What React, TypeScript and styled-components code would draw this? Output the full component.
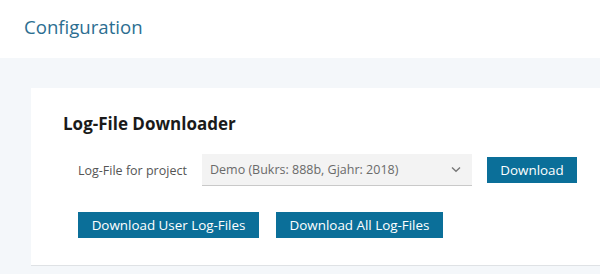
import React from "react";
import styled, { createGlobalStyle } from "styled-components";

const Global = createGlobalStyle`
  html, body { margin: 0; padding: 0; background: #f4f7fa; overflow: hidden; }
  body { font-family: "Open Sans", "Liberation Sans", sans-serif; }
  * { box-sizing: border-box; }
`;

const Header = styled.header`
  height: 58px;
  background: #ffffff;
  display: flex;
  align-items: center;
  padding-left: 24px;
`;

const PageTitle = styled.h1`
  margin: 0;
  font-size: 18.6px;
  font-weight: 400;
  color: #2c6e91;
  line-height: 26px;
  padding-bottom: 4px;
`;

const Main = styled.main`
  padding: 30px 0 10px 31px;
  min-height: 216px;
`;

const Card = styled.section`
  background: #ffffff;
  padding: 24px 32px 27px 32px;
  border-bottom: 1px solid #dfe2e5;
  display: flex;
  flex-direction: column;
`;

const CardTitle = styled.h2`
  margin: 0;
  font-size: 17px;
  font-weight: 700;
  line-height: 24px;
  color: #1a1a1a;
`;

const Body = styled.div`
  padding-left: 15px;
  margin-top: 18px;
  display: flex;
  flex-direction: column;
  gap: 26px;
`;

const Row = styled.div<{ $gap: number }>`
  display: flex;
  align-items: center;
  gap: ${(p) => p.$gap}px;
  & > * { flex-shrink: 0; }
`;

const Label = styled.label`
  font-size: 12.5px;
  color: #555;
  width: 109px;
  white-space: nowrap;
`;

const SelectBox = styled.div`
  width: 270px;
  height: 32px;
  background: #f3f3f3;
  border-bottom: 1px solid #c9c9c9;
  display: flex;
  align-items: center;
  justify-content: space-between;
  padding: 0 11px 0 8px;
  font-size: 12.5px;
  color: #6a6a6a;
`;

const Button = styled.button<{ $w: number }>`
  width: ${(p) => p.$w}px;
  height: 26px;
  background: #0b6f99;
  color: #ffffff;
  border: none;
  border-radius: 0;
  font-family: "Open Sans", "Liberation Sans", sans-serif;
  font-size: 13.4px;
  padding: 0;
  cursor: pointer;
`;

const Chevron = () => (
  <svg width="10" height="7" viewBox="0 0 10 7" fill="none">
    <path d="M1 1.5 L5 5.2 L9 1.5" stroke="#777" strokeWidth="1.4" />
  </svg>
);

export default function App() {
  return (
    <>
      <Global />
      <Header>
        <PageTitle>Configuration</PageTitle>
      </Header>
      <Main>
        <Card>
          <CardTitle>Log-File Downloader</CardTitle>
          <Body>
            <Row $gap={15}>
              <Label>Log-File for project</Label>
              <SelectBox>
                <span>Demo (Bukrs: 888b, Gjahr: 2018)</span>
                <Chevron />
              </SelectBox>
              <Button $w={90}>Download</Button>
            </Row>
            <Row $gap={17}>
              <Button $w={181}>Download User Log-Files</Button>
              <Button $w={167}>Download All Log-Files</Button>
            </Row>
          </Body>
        </Card>
      </Main>
    </>
  );
}
